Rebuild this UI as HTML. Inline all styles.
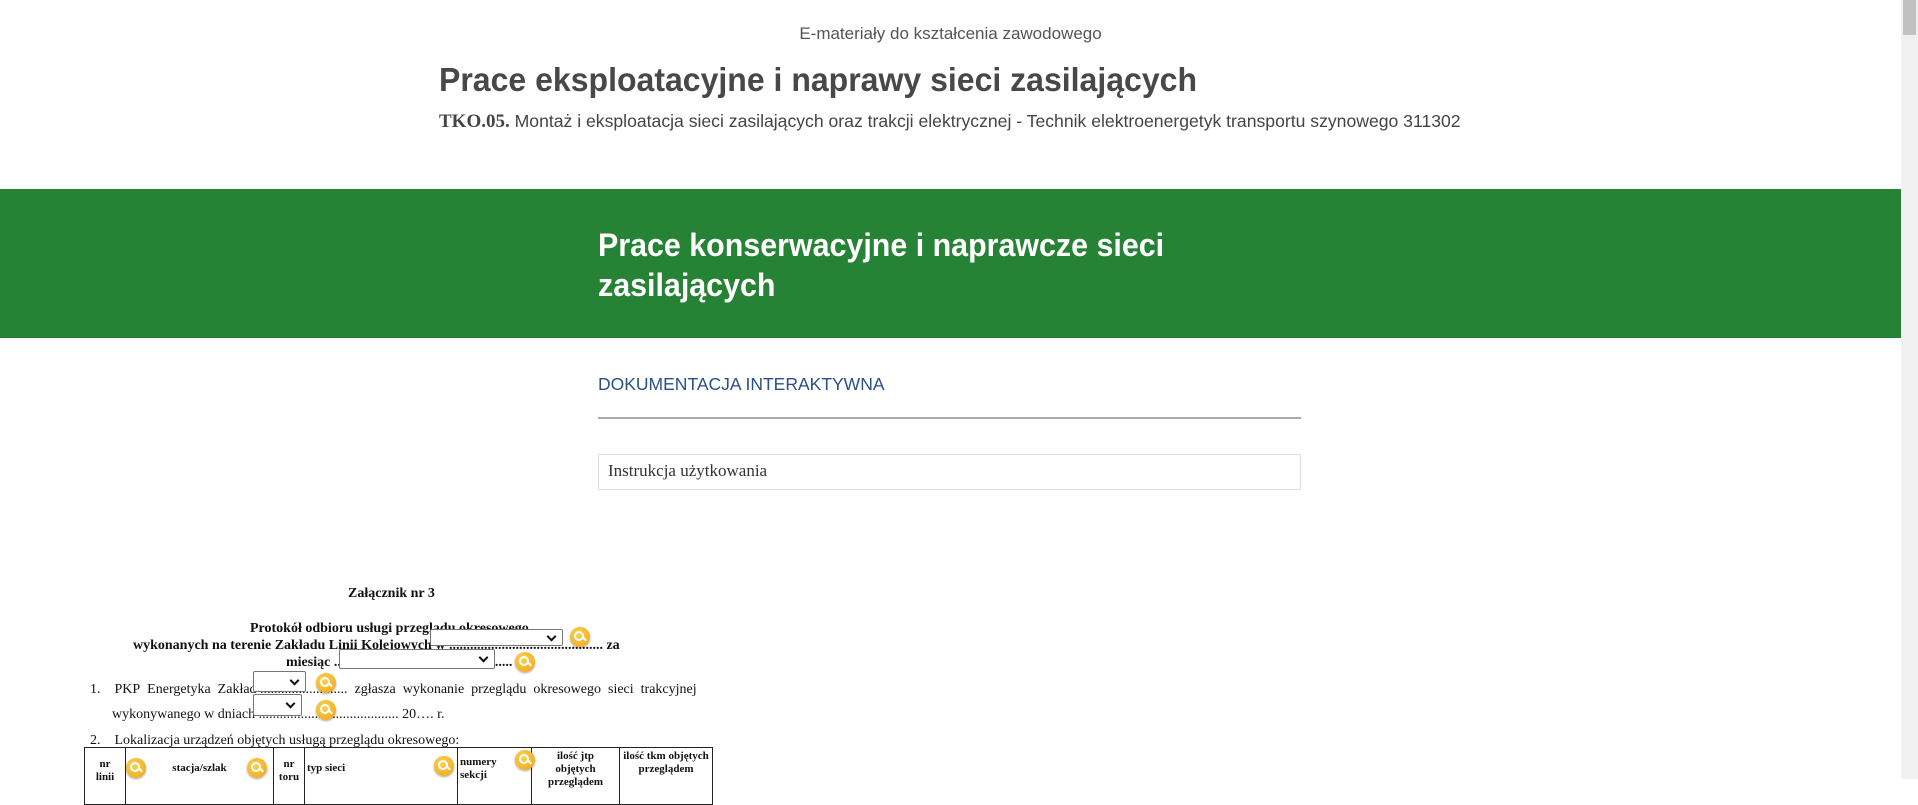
<!DOCTYPE html>
<html><head><meta charset="utf-8"><style>
body{margin:0;width:1918px;height:779px;overflow:hidden;background:#fff;position:relative;font-family:"Liberation Sans",sans-serif;color:#444}
.a{position:absolute;white-space:nowrap}
.sx{transform-origin:0 0;display:inline-block}
.doc{font-family:"Liberation Serif",serif;color:#111;font-size:14px}
.sel{position:absolute;border:1px solid #777;background:#fff;box-sizing:border-box;border-radius:2px}
.sel:after{content:"";position:absolute;right:7px;top:50%;width:5px;height:5px;border-right:2px solid #111;border-bottom:2px solid #111;transform:translateY(-70%) rotate(45deg)}
.mag{position:absolute;width:20px;height:20px;border-radius:50%;background:radial-gradient(circle at 40% 35%,#fbd24e,#eea21a);box-shadow:0 1px 2px rgba(0,0,0,.35)}
.mag:before{content:"";position:absolute;left:4px;top:4px;width:6px;height:6px;border:2px solid #fff;border-radius:50%}
.mag:after{content:"";position:absolute;left:12px;top:11px;width:5px;height:2px;background:#fff;transform:rotate(45deg)}
table{position:absolute;left:84px;top:747px;border-collapse:collapse;font-family:"Liberation Serif",serif;font-size:11px;font-weight:bold;color:#111}
td{border:1px solid #222;height:40px;vertical-align:top;padding:2px;text-align:center;line-height:13px}
</style></head><body>
<div class="a" style="left:0;width:1901px;top:24px;text-align:center;font-size:17px;color:#555">E-materiały do kształcenia zawodowego</div>
<div class="a" style="left:439px;top:61px;font-size:33px;font-weight:bold;color:#484848"><span class="sx" style="transform:scaleX(0.97)">Prace eksploatacyjne i naprawy sieci zasilających</span></div>
<div class="a" style="left:439px;top:111px;font-size:17.6px;color:#444"><b style="font-family:'Liberation Serif',serif;font-size:19px">TKO.05.</b> Montaż i eksploatacja sieci zasilających oraz trakcji elektrycznej - Technik elektroenergetyk transportu szynowego 311302</div>
<div class="a" style="left:0;top:189px;width:1901px;height:149px;background:#268335"></div>
<div class="a" style="left:598px;top:225px;font-size:32px;font-weight:bold;color:#fff;line-height:40px"><span class="sx" style="transform:scaleX(0.95)">Prace konserwacyjne i naprawcze sieci<br>zasilających</span></div>
<div class="a" style="left:598px;top:374px;font-size:17.5px;color:#2b4f87">DOKUMENTACJA INTERAKTYWNA</div>
<div class="a" style="left:598px;top:417px;width:703px;height:2px;background:#aaa"></div>
<div class="a" style="left:598px;top:454px;width:703px;height:36px;border:1px solid #ddd;box-sizing:border-box"></div>
<div class="a" style="left:608px;top:461px;font-family:'Liberation Serif',serif;font-size:17px;color:#333">Instrukcja użytkowania</div>
<div class="a" style="left:1901px;top:0;width:17px;height:779px;background:#f0f0f0"></div>
<div class="a" style="left:1903px;top:0;width:13px;height:35px;background:#c1c1c1"></div>

<div class="a doc" style="left:348px;top:586px;font-weight:bold">Załącznik nr 3</div>
<div class="a doc" style="left:250px;top:621px;font-weight:bold">Protokół odbioru usługi przeglądu okresowego</div>
<div class="a doc" style="left:133px;top:638px;font-weight:bold">wykonanych na terenie Zakładu Linii Kolejowych w ............................................ za</div>
<div class="a doc" style="left:286px;top:655px;font-weight:bold">miesiąc ...................................................</div>
<div class="sel" style="left:430px;top:629px;width:133px;height:17px"></div>
<div class="mag" style="left:570px;top:627px"></div>
<div class="sel" style="left:339px;top:649px;width:156px;height:20px"></div>
<div class="mag" style="left:515px;top:652px"></div>
<div class="a doc" style="left:90px;top:682px">1.&nbsp;&nbsp;&nbsp;&nbsp;PKP&nbsp; Energetyka&nbsp; Zakład ......................... &nbsp;zgłasza&nbsp; wykonanie&nbsp; przeglądu&nbsp; okresowego&nbsp; sieci&nbsp; trakcyjnej</div>
<div class="a doc" style="left:112px;top:707px">wykonywanego w dniach ........................................ 20…. r.</div>
<div class="sel" style="left:253px;top:671px;width:53px;height:21px"></div>
<div class="mag" style="left:316px;top:673px"></div>
<div class="sel" style="left:253px;top:694px;width:49px;height:22px"></div>
<div class="mag" style="left:316px;top:700px"></div>
<div class="a doc" style="left:90px;top:733px">2.&nbsp;&nbsp;&nbsp;&nbsp;Lokalizacja urządzeń objętych usługą przeglądu okresowego:</div>
<table><tr>
<td style="width:36px;padding-top:10px">nr<br>linii</td>
<td style="width:143px;padding-top:14px">stacja/szlak</td>
<td style="width:26px;padding-top:10px">nr<br>toru</td>
<td style="width:148px;text-align:left;padding-top:14px">typ sieci</td>
<td style="width:69px;text-align:left;padding-top:8px">numery<br>sekcji</td>
<td style="width:83px">ilość jtp<br>objętych<br>przeglądem</td>
<td style="width:88px">ilość tkm objętych<br>przeglądem</td>
</tr></table>
<div class="mag" style="left:126px;top:758px"></div>
<div class="mag" style="left:247px;top:758px"></div>
<div class="mag" style="left:434px;top:756px"></div>
<div class="mag" style="left:515px;top:750px"></div>
</body></html>
